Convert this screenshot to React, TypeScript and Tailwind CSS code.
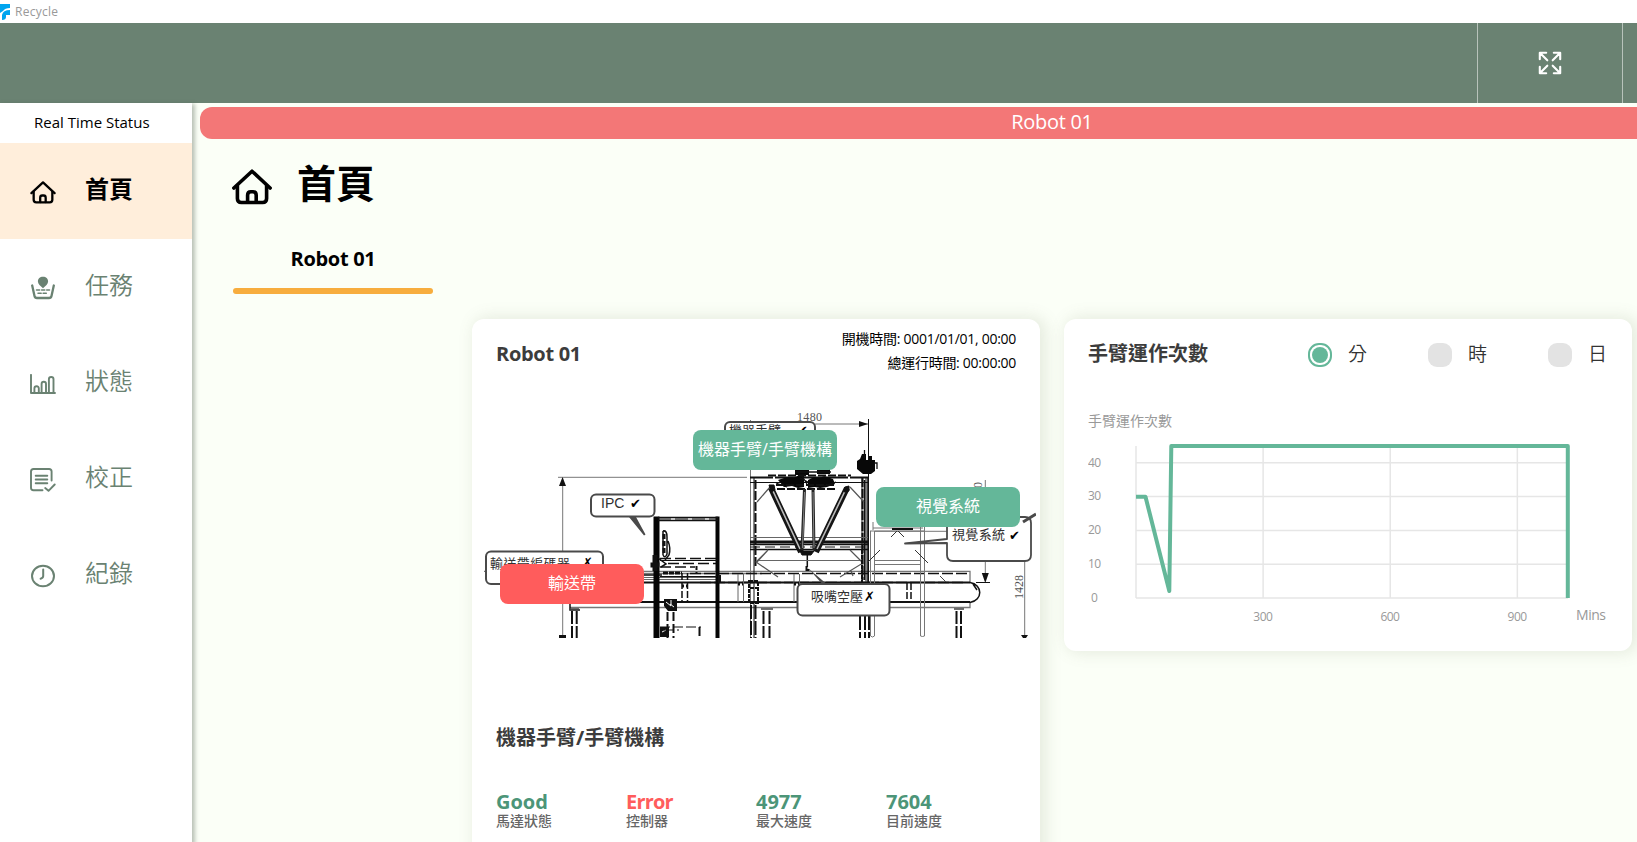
import React from 'react';

type IconProps = { className?: string };

function HomeIcon({ className }: IconProps) {
  return (
    <svg viewBox="0 0 40 36" className={className} fill="none" stroke="currentColor" strokeWidth="3.600" strokeLinecap="round" strokeLinejoin="round">
      <path d="M1.900 19 20 2.200 38.100 19" />
      <path d="M5.400 16.500V29.500q0 4 4 4h21.200q4 0 4-4V16.500" />
      <path d="M15.600 33V26.300q0-3.600 3.200-3.600h2.200q3.200 0 3.200 3.600V33" />
    </svg>
  );
}

function TaskIcon({ className }: IconProps) {
  return (
    <svg viewBox="0 0 24 24" className={className} fill="none" stroke="currentColor" strokeLinecap="round" strokeLinejoin="round">
      <path d="M12 .8C8.900.8 6.900 2.800 6.900 5.400c0 2.700 2.500 4.200 5.100 6.800 2.600-2.600 5.100-4.100 5.100-6.800C17.100 2.800 15.100.8 12 .8Z" fill="currentColor" stroke="none" />
      <path d="M1.200 9.500 3.500 20q.4 2 2.500 2h12q2.100 0 2.500-2L22.800 9.500" strokeWidth="2.300" />
      <path d="M5.500 14h13M7 17.300h10" strokeWidth="1.500" strokeDasharray="3.200 1.900" />
    </svg>
  );
}

function StatusIcon({ className }: IconProps) {
  return (
    <svg viewBox="0 0 26 20" className={className} fill="none" stroke="currentColor" strokeWidth="1.900" strokeLinecap="round" strokeLinejoin="round">
      <path d="M1 .9V19h24" />
      <path d="M4.400 18.500v-4q0-2.200 2.200-2.200t2.200 2.200v4M11.600 18.500V10q0-2.200 2.200-2.200T16 10v8.500M18.900 18.500V5.300q0-2.300 2.300-2.300t2.300 2.300v13.200" />
    </svg>
  );
}

function CheckListIcon({ className }: IconProps) {
  return (
    <svg viewBox="0 0 26 24" className={className} fill="none" stroke="currentColor" strokeWidth="1.900" strokeLinecap="round" strokeLinejoin="round">
      <path d="M21.600 12.500V3.500q0-2.500-2.500-2.500H3.500Q1 1 1 3.500v16.200Q1 22.200 3.500 22.200h9" />
      <path d="M5.700 7.800h11.600M5.700 11.500h11.600M5.700 15.200h11.600" />
      <path d="m15.200 20 3.300 2.800 6.200-6.300" />
    </svg>
  );
}

function ClockIcon({ className }: IconProps) {
  return (
    <svg viewBox="0 0 24 24" className={className} fill="none" stroke="currentColor" strokeWidth="2" strokeLinecap="round" strokeLinejoin="round">
      <ellipse cx="12" cy="12" rx="11" ry="10.300" />
      <path d="M12.200 5.500V12q0 2-2.600 2.700" />
    </svg>
  );
}

function ExpandIcon() {
  return (
    <svg viewBox="0 0 24 24" className="h-6 w-6" fill="none" stroke="white" strokeWidth="2.100" strokeLinecap="round" strokeLinejoin="round">
      <path d="M1.800 8.200V1.800h6.400M2.300 2.300 9.300 9.300M15.800 1.800h6.400v6.400M21.700 2.300 14.700 9.300M1.800 15.800v6.400h6.400M2.300 21.700 9.300 14.700M15.800 22.200h6.400v-6.400M21.700 21.700 14.700 14.700" />
    </svg>
  );
}

const navItems = [
  { label: '首頁', Icon: HomeIcon, size: 'h-[23px] w-[26px]' },
  { label: '任務', Icon: TaskIcon, size: 'h-6 w-6' },
  { label: '狀態', Icon: StatusIcon, size: 'h-5 w-[26px]' },
  { label: '校正', Icon: CheckListIcon, size: 'h-6 w-[26px]' },
  { label: '紀錄', Icon: ClockIcon, size: 'h-6 w-6' },
];

function Sidebar() {
  return (
    <aside className="z-10 flex w-48 shrink-0 flex-col bg-white shadow-[2px_2px_4px_1px_rgba(70,85,70,0.36)]">
      <div className="flex h-10 items-center pb-0.5 pl-[34px] text-[15px] text-black">Real Time Status</div>
      <nav className="flex flex-col">
        {navItems.map(({ label, Icon, size }, i) => (
          <div key={label} className={i === 0 ? 'flex h-24 items-center bg-[#ffeedb] text-black' : 'flex h-24 items-center text-[#6a8272]'}>
            <div className="mt-0.5 ml-[30px] flex w-[26px] justify-center">
              <Icon className={size} />
            </div>
            <span className={i === 0 ? 'ml-[29px] pb-1 text-2xl leading-8 font-bold' : 'ml-[29px] pb-1 text-2xl leading-8 font-[350]'}>{label}</span>
          </div>
        ))}
      </nav>
    </aside>
  );
}

const labelFont = { fontFamily: '"Liberation Sans", "Noto Sans CJK TC", sans-serif' };

/* Side elevation of the sorting cell, drawn in panel pixels. */
function MachineDrawing() {
  return (
    <svg viewBox="484 410 552 228" className="h-[228px] w-[552px]" fill="none" stroke="#111" strokeWidth="1">
      {/* dimension lines */}
      <g stroke="#777">
        <path d="M750.500 420v218M558 477.300h189M562.700 478v160M985.300 480v101M1024.700 558v80M815 424h53" />
        <path d="M875 531.300h75" />
      </g>
      <path d="M868.500 419v60M976 582.500h14" />
      <g fill="#111" stroke="none">
        <path d="m868 424-9-3v6zM562.500 477l-3.500 9h7zM985.300 583l-3.500-10h7zM559 635h7v3h-7zM1021 635h7l-2 3h-3z" />
      </g>
      <g fill="#555" stroke="none" fontSize="12" style={{ fontFamily: '"Liberation Serif", serif' }}>
        <text x="797" y="421" textLength="25">1480</text>
        <text transform="translate(1022.500 599) rotate(-90)" textLength="24">1428</text>
        <text transform="translate(982 488) rotate(-90)">0</text>
      </g>

      {/* conveyor */}
      <g>
        <path stroke="#777" strokeWidth="1.300" d="M484 571.300h486v11M644 573.500h118M570 607.500h400v-5" />
        <path strokeWidth="1.300" strokeDasharray="11 3" d="M644 575h18M690 573.500h280M700 582.500h265" />
        <path strokeWidth="2" d="M570 582.500h400M570 602h400" />
        <path stroke="#666" d="M644 577.500h74M644 579.500h74" />
        <path strokeWidth="1.500" d="M970 582.500c13 2 13 18 0 20M973 584l4 6" />
        <path strokeWidth="1.500" d="M570 603v7h10" />
        <path strokeWidth="1.500" strokeDasharray="7 2" d="M682 573v29M687.500 573v29M907 583v19M911 583v19" />
        <path stroke="#666" d="M738 574v28M743.500 574v28M794 574v28M799.500 574v28" />
        <path strokeDasharray="2 2" d="M682 586h6M738 584h5M794 584h5" strokeWidth="3" />
        <path stroke="#444" d="m940 576 6 6" />
      </g>
      {/* conveyor legs */}
      <g strokeWidth="2" strokeDasharray="13 2">
        <path d="M572 611v27M576.700 611v27M763.500 611v27M769.500 611v27M956.500 611v27M961 611v27" />
      </g>
      <path d="M570 609h9M761 609h12M954 609h10" stroke="#444" strokeWidth="1.300" />

      {/* control cabinet */}
      <g>
        <path strokeWidth="6" d="M656.500 516.500V638" stroke="#050505" />
        <path strokeWidth="4" d="M717.500 516.500V638" stroke="#050505" />
        <path strokeWidth="1.500" d="M658 517.500h60M658 520.500h60" />
        <path strokeDasharray="13 4" d="M658 519h60" />
        <path strokeWidth="1.300" strokeDasharray="11 4" d="M660 558.500h57M668 563.500h48M660 567h35" />
        <path d="M660 560.500h57M660 576.500h57" />
        <path strokeWidth="3" strokeDasharray="5 1" d="M663 573h19" />
        <path strokeDasharray="4 2" strokeWidth="2" d="M696.500 566v8" />
        <path strokeWidth="1.500" d="M663 531v24M663 531q4-1 4 6v17q-2 5-4 1M668 541q3 7 1 14l-4 5M658 558l8 6-5 3" />
        <path strokeWidth="3" strokeDasharray="5 2" d="M664 534v20" />
        <path d="M650.500 565h9M655 555v16" strokeWidth="5" />
        <g fill="#111" stroke="none">
          <path d="M718 575h3v8h-3zM664 599h13v12h-9l-4-5zM660 627h9v10h-9z" />
        </g>
        <path stroke="white" d="m666 602 5 4M671 600v5M674 607l-4-3M662 632l4-2" />
        <path strokeWidth="2" strokeDasharray="9 3" d="M667.500 612v26M673.500 612v26M699.500 627v11" />
        <path strokeDasharray="10 3" d="M660 627h41M664 630h15" />
      </g>

      {/* portal frame */}
      <g>
        <path strokeWidth="2" strokeDasharray="23 2" d="M750 477.500h118" />
        <path d="M750 482.500h118M754 478v160M862 478v104M866 478v104M868.500 478v104" />
        <path strokeWidth="2" strokeDasharray="9 2" d="M755.500 480v86M862.500 478v102" />
        <path strokeWidth="1.600" d="M868 478v104M864.500 480v100" />
        <path strokeWidth="3" d="M750 542h118" />
        <path stroke="#666" d="M750 537.500h118M757 560.500h107" />
        <path strokeWidth="1.700" d="M750 544.500h118M750 549.500h118" />
        <path strokeDasharray="10 5" d="M750 547h118" />
        <path strokeWidth="1.200" stroke="#555" d="m757 502 13-15m80 0 14 15M768 550l-12 12 22 15M850 550l13 13-23 14M757 562l11-12m85 26-2-5" />
        <path strokeWidth="2" d="M750 588h9M749 581h9v22h-9zM862 550v33" strokeDasharray="4 1" />
        <path strokeWidth="2" strokeDasharray="14 2" d="M751 605v33M755.500 605v33M860 616v22M865 616v22M869 616v22" />
      </g>

      {/* delta robot */}
      <g>
        <g fill="#080808" stroke="none">
          <path d="m778 480 9-3 7 1 5-3h5v12l-6 1-6-2-8 1zM808 480l6-3 6 1 4-2 9 3 2 5-8 3-7 1-5-1-7 1z" />
          <path d="M795 469h14v6h-14zM817 469h13v5h-13zM857 461l3-2 2-5h4v6h3v-4h3v4h3v11l-4 3h-8l-6-5z" />
        </g>
        <path strokeWidth="1.800" strokeDasharray="8 2" d="M768 475.500h83M776 485h60M777 489h59" />
        <path strokeWidth="1.300" d="M864.500 450v8M874 463h3v6M795 472h36M802 476l5 8M800 478l8 4M824 486l12-4M787 487l-11-4" />
        <path stroke="#151515" strokeWidth="6" d="m771 488 30 64M847 488l-31 64" />
        <path stroke="#bbb" strokeWidth="1.600" d="m773 491 27 58M845 491l-28 58" />
        <path strokeWidth="3" stroke="#252525" d="M804.500 489 802 550M813 489l1 61" />
        <path stroke="#888" d="M804.500 492 802.500 548M813 492l1 56" />
        <path fill="#111" d="M769 485h5l1 5-4 2zM845 487l4-1v5l-5 1zM800 551h14l-3 4h-9z" />
        <path strokeWidth="1.500" strokeDasharray="6 1" d="M807.300 554v14" />
        <path strokeWidth="2" d="M806.500 566v4h3" />
      </g>

      {/* camera stand */}
      <g stroke="#777">
        <path d="M870.500 531v105q2 2 4 0V531M920.500 526v110q2 1 4 0V526M870 531h54M873 528h50M873 522v8M921 526h4M875 560.500h45M875 564.500h45" />
        <path d="M880 550 868 562M915 550l13 13M897 531l-6 6M898 531l6 6" stroke="#333" />
        <path strokeWidth="2" d="M892 529h21" stroke="#111" />
      </g>

      {/* callouts */}
      <g fill="white" stroke="#4a4a4a" strokeWidth="2" strokeLinejoin="round">
        <path fill="#4a4a4a" stroke="none" d="m629 517 15 18.500 1.500-1-9.500-17.500zM808 568l16 18h5l-14-12zM905 543l45-4v4z" />
        <rect x="591" y="494.500" width="63.500" height="22" rx="5" />
        <rect x="486" y="551.500" width="117" height="32.500" rx="5" />
        <rect x="725" y="422" width="90" height="34" rx="5" />
        <path d="M905 543.500 947 539V523q0-6 6-6h72q6 0 6 6v32q0 6-6 6h-72q-6 0-6-6v-12z" strokeWidth="1.800" />
        <rect x="797.500" y="584" width="92" height="31.500" rx="5" />
      </g>
      <path d="m1036 514-13 8" stroke="#4a4a4a" strokeWidth="3" />
      <g style={labelFont} fill="#303030" stroke="none" fontSize="13">
        <text x="601" y="508" fontSize="14">IPC</text>
        <text x="490" y="567.500" textLength="80">輸送帶編碼器</text>
        <text x="729" y="434.500" textLength="52">機器手臂</text>
        <text x="952" y="539" textLength="53">視覺系統</text>
        <text x="811" y="600.500" textLength="52">吸嘴空壓</text>
        <g style={{ fontFamily: '"DejaVu Sans", sans-serif' }} fill="#000" fontSize="13">
          <text x="630" y="508">✔</text>
          <text x="582" y="567">✗</text>
          <text x="797" y="435">✔</text>
          <text x="1009" y="539.500">✔</text>
          <text x="864" y="600.500">✗</text>
        </g>
      </g>
    </svg>
  );
}

const metrics = [
  { value: 'Good', name: '馬達狀態', tone: 'text-[#4c9578]' },
  { value: 'Error', name: '控制器', tone: 'text-[#ff5c5c] tracking-[-0.8px]' },
  { value: '4977', name: '最大速度', tone: 'text-[#4c9578]' },
  { value: '7604', name: '目前速度', tone: 'text-[#4c9578]' },
];

const tag = 'absolute flex h-10 w-36 items-center justify-center rounded-lg pb-0.5 text-base whitespace-nowrap text-white';

function RobotCard() {
  return (
    <section className="flex h-[560px] w-[568px] shrink-0 flex-col rounded-xl bg-white shadow-[4px_0_16px_2px_rgba(106,120,90,0.15)]">
      <div className="flex h-[91px] justify-between pr-6 pl-6">
        <h2 className="pt-[21px] text-xl leading-7 font-bold tracking-[-0.3px] text-[#3c3c3c]">Robot 01</h2>
        <div className="flex flex-col items-end pt-2 text-sm leading-6 tracking-[-0.28px] text-black">
          <span>開機時間: 0001/01/01, 00:00</span>
          <span>總運行時間: 00:00:00</span>
        </div>
      </div>
      <div className="relative ml-3 h-[229px] w-[552px]">
        <MachineDrawing />
        <div className={`${tag} top-5 left-[209px] bg-[#64b799]`}>機器手臂/手臂機構</div>
        <div className={`${tag} top-[77px] left-[392px] bg-[#64b799]`}>視覺系統</div>
        <div className={`${tag} top-[154px] left-4 bg-[#ff5c5c]`}>輸送帶</div>
      </div>
      <h3 className="mt-[85px] ml-6 text-xl leading-7 font-bold text-[#3c3c3c]">機器手臂/手臂機構</h3>
      <div className="mt-[38px] ml-6 grid grid-cols-[130px_130px_130px_130px]">
        {metrics.map((m) => (
          <div key={m.name} className="flex flex-col">
            <span className={`${m.tone} text-xl leading-6 font-bold`}>{m.value}</span>
            <span className="-mt-px text-sm leading-4 font-medium text-[#666]">{m.name}</span>
          </div>
        ))}
      </div>
    </section>
  );
}

function Radio({ text, checked }: { text: string; checked?: boolean }) {
  return (
    <div className="flex w-[120px] shrink-0 items-center">
      {checked ? (
        <div className="flex h-6 w-6 items-center justify-center rounded-[11px] border-2 border-[#64b799]">
          <div className="h-4 w-4 rounded-full bg-[#64b799]" />
        </div>
      ) : (
        <div className="h-6 w-6 rounded-[9px] bg-[#e3e3e3]" />
      )}
      <span className="ml-4 pb-0.5 text-[19px] leading-6 font-[350] text-[#333]">{text}</span>
    </div>
  );
}

function LineChart() {
  const yTicks = [0, 10, 20, 30, 40];
  const xTicks = [300, 600, 900];
  const px = (v: number) => 48 + v * 0.4237;
  const py = (v: number) => 158 - v * 3.38;
  return (
    <svg viewBox="0 0 530 190" className="h-[190px] w-[530px]" fill="none">
      <g stroke="#e6e6e6" strokeWidth="1.500">
        {yTicks.map((v) => (
          <path key={v} d={`M48 ${py(v)}H480`} />
        ))}
        {[0, ...xTicks].map((v) => (
          <path key={v} d={`M${px(v)} 6V158`} />
        ))}
      </g>
      <path d="M48 56.800h9.500L81.300 151 83.300 6H479.800V158" stroke="#64b799" strokeWidth="4" strokeLinejoin="round" />
      <g fill="#999" fontSize="12">
        {yTicks.map((v) => (
          <text key={v} x="6.500" y={py(v) + 3.800} textAnchor="middle" textLength={v ? 13 : undefined}>{v}</text>
        ))}
        {xTicks.map((v) => (
          <text key={v} x={px(v)} y="180.500" textAnchor="middle" textLength="19.500">{v}</text>
        ))}
        <text x="488" y="180" fontSize="14" textLength="30">Mins</text>
      </g>
    </svg>
  );
}

function ChartCard() {
  return (
    <section className="flex h-[332px] w-[568px] shrink-0 flex-col rounded-xl bg-white pl-6 shadow-[4px_0_16px_2px_rgba(106,120,90,0.15)]">
      <div className="flex h-[72px] items-center">
        <h2 className="w-[220px] shrink-0 pb-0.5 text-xl leading-7 font-bold text-[#3c3c3c]">手臂運作次數</h2>
        <Radio text="分" checked />
        <Radio text="時" />
        <Radio text="日" />
      </div>
      <div className="mt-5 h-[29px] text-sm leading-5 text-[#999]">手臂運作次數</div>
      <LineChart />
    </section>
  );
}

export default function App() {
  return (
    <div className="flex h-[842px] w-[1637px] flex-col overflow-hidden bg-[#fbfff7] font-['Open_Sans','Noto_Sans_CJK_TC',sans-serif]">
      <div className="flex h-[23px] shrink-0 items-center bg-white">
        <svg viewBox="0 0 10 16" className="h-4 w-2.5" fill="#00a5ef">
          <path d="M0 0h10v4Q5 4 3 7L0 9zM2 16v-5q1-5 8-5v5H6v2q0 3-4 3Z" />
        </svg>
        <span className="ml-[5px] text-xs tracking-[0.25px] text-[#999]">Recycle</span>
      </div>
      <header className="flex h-20 shrink-0 justify-end bg-[#6a8272]">
        <div className="flex w-[145px] items-center justify-center border-l border-[#b8c3bb]">
          <ExpandIcon />
        </div>
        <div className="w-[15px] border-l border-[#b8c3bb]" />
      </header>
      <div className="flex min-h-0 flex-1">
        <Sidebar />
        <main className="flex min-w-0 flex-1 flex-col">
          <div className="mt-1 ml-2 flex h-8 w-[1704px] shrink-0 items-center justify-center rounded-xl bg-[#f37777] pb-0.5 text-xl tracking-[-0.3px] text-white">Robot 01</div>
          <div className="mt-[19px] ml-10 flex h-[54px] items-center gap-[25px]">
            <HomeIcon className="mt-1 h-9 w-10" />
            <h1 className="pb-1 text-[39px] leading-[50px] font-bold text-black">首頁</h1>
          </div>
          <div className="mt-[33px] ml-[41px] flex w-[200px] flex-col items-center">
            <span className="text-xl leading-7 font-bold tracking-[-0.3px] text-black">Robot 01</span>
            <div className="mt-[15px] h-1.5 w-full rounded-full bg-[#f7ad3e]" />
          </div>
          <div className="mt-[25px] ml-[280px] flex items-start gap-6">
            <RobotCard />
            <ChartCard />
          </div>
        </main>
      </div>
    </div>
  );
}
